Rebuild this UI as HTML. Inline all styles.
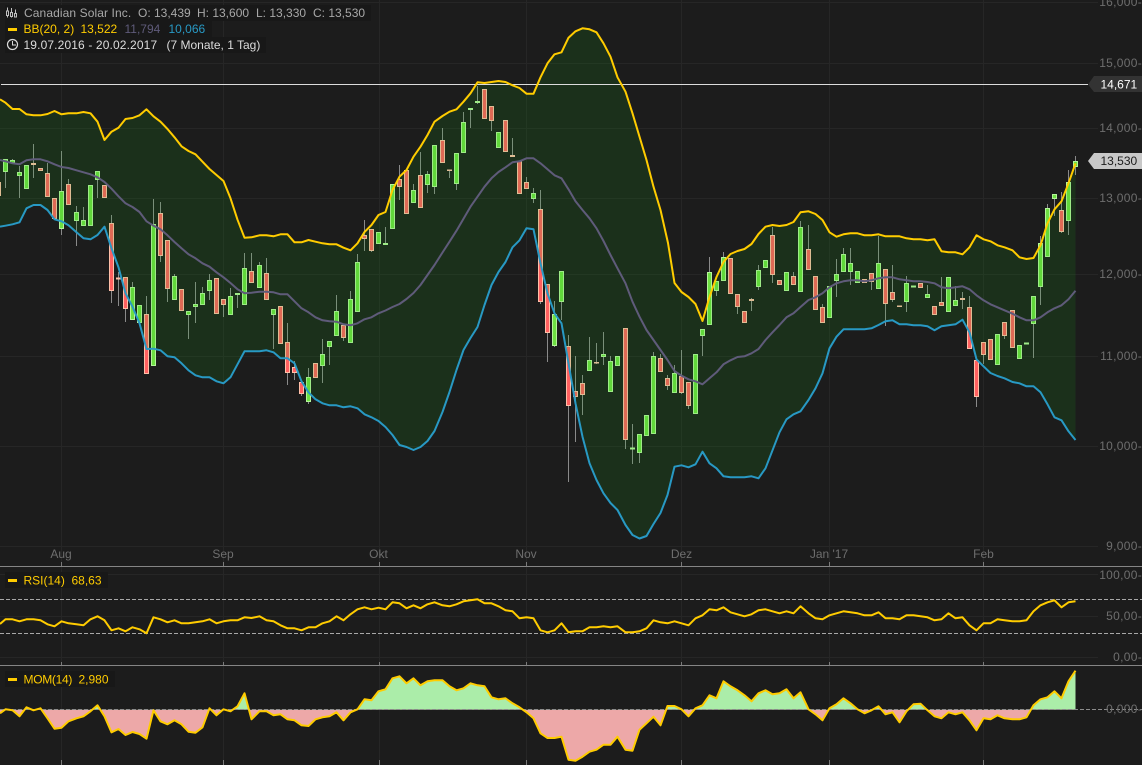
<!DOCTYPE html>
<html><head><meta charset="utf-8"><title>Canadian Solar Inc.</title>
<style>
html,body{margin:0;padding:0;background:#1c1c1c;width:1142px;height:765px;overflow:hidden}
svg{display:block}
text{font-family:"Liberation Sans",sans-serif;font-size:12px}
.ax{fill:#6e6e6e;text-anchor:end;letter-spacing:.3px}
.mo{fill:#6e6e6e;text-anchor:middle}
.y{fill:#ffcc00}
</style></head><body>
<svg width="1142" height="765" viewBox="0 0 1142 765" xmlns="http://www.w3.org/2000/svg">
<rect width="1142" height="765" fill="#1c1c1c"/>
<!-- grid -->
<path fill="none" stroke="#262626" stroke-width="1" d="M0 2.5H1098M0 63.5H1098M0 128.5H1098M0 198.5H1098M0 274.5H1098M0 356.5H1098M0 446.5H1098M0 546.5H1098M0 574.5H1098M0 616.5H1098M0 657.5H1098M61.5 0V765M223.5 0V765M379.5 0V765M526.5 0V765M681.5 0V765M829.5 0V765M983.5 0V765"/>
<!-- wicks -->
<path fill="none" stroke="#8a8a8a" stroke-width="1" d="M5.5 159V188M12.5 159V160M19.5 166V198M33.5 144V178M47.5 163V173M61.5 151V235M68.5 179V184M76.5 206V246M83.5 207V220M97.5 171V198M111.5 215V303M118.5 272V306M125.5 277V322M132.5 282V287M146.5 296V314M153.5 199V224M160.5 202V262M167.5 289V302M174.5 274V276M188.5 315V339M195.5 282V323M202.5 287V293M209.5 274V300M223.5 305V317M230.5 288V296M237.5 295V308M244.5 253V268M251.5 253V271M259.5 262V265M266.5 258V273M273.5 315V349M287.5 323V385M294.5 361V380M301.5 394V396M308.5 368V404M322.5 339V383M329.5 347V365M336.5 295V311M343.5 338V341M350.5 291V299M357.5 254V262M364.5 220V251M371.5 251V252M385.5 227V245M399.5 165V200M413.5 184V190M420.5 152V175M427.5 171V193M434.5 187V194M442.5 128V140M449.5 171V178M456.5 184V190M463.5 112V122M470.5 110V128M477.5 86V104M491.5 121V131M512.5 138V155M526.5 177V182M533.5 188V203M540.5 190V304M547.5 333V362M554.5 301V347M561.5 302V320M568.5 335V482M575.5 356V442M582.5 375V415M589.5 337V360M596.5 343V364M603.5 332V365M610.5 356V361M625.5 440V449M632.5 424V464M639.5 453V463M653.5 352V356M660.5 354V358M667.5 375V390M674.5 365V373M681.5 350V394M688.5 406V409M702.5 336V356M709.5 257V272M716.5 291V296M723.5 252V257M737.5 307V314M751.5 298V311M758.5 265V290M772.5 227V283M793.5 272V276M800.5 221V227M808.5 225V249M822.5 304V307M836.5 259V297M843.5 248V254M850.5 248V285M871.5 282V290M878.5 236V263M885.5 304V326M892.5 265V302M906.5 276V312M927.5 285V294M941.5 277V302M955.5 286V300M962.5 292V309M969.5 296V307M976.5 397V407M983.5 355V364M1004.5 336V339M1033.5 324V358M1040.5 236V305M1047.5 204V208M1054.5 199V216M1061.5 192V233M1068.5 170V235M1075.5 156V175"/>
<!-- green bodies -->
<path fill="#6edf42" stroke="#b4f59a" stroke-width="1" d="M3.5 159.5h4v12h-4zM10.5 160.5h4v2h-4zM17.5 172.5h4v3h-4zM24.5 165.5h4v23h-4zM59.5 191.5h4v37h-4zM74.5 212.5h4v8h-4zM81.5 220.5h4v5h-4zM88.5 185.5h4v40h-4zM95.5 171.5h4v8h-4zM130.5 287.5h4v32h-4zM137.5 305.5h4v17h-4zM151.5 224.5h4v141h-4zM172.5 276.5h4v23h-4zM186.5 311.5h4v3h-4zM193.5 304.5h4v2h-4zM200.5 293.5h4v11h-4zM207.5 280.5h4v10h-4zM228.5 296.5h4v18h-4zM235.5 293.5h4v1h-4zM242.5 268.5h4v36h-4zM257.5 265.5h4v22h-4zM271.5 309.5h4v5h-4zM306.5 377.5h4v24h-4zM320.5 354.5h4v11h-4zM327.5 341.5h4v5h-4zM334.5 311.5h4v24h-4zM348.5 299.5h4v43h-4zM355.5 262.5h4v49h-4zM376.5 232.5h4v11h-4zM383.5 243.5h4v1h-4zM390.5 184.5h4v44h-4zM411.5 190.5h4v12h-4zM425.5 174.5h4v10h-4zM432.5 145.5h4v41h-4zM454.5 153.5h4v30h-4zM461.5 122.5h4v30h-4zM468.5 108.5h4v1h-4zM475.5 101.5h4v1h-4zM496.5 132.5h4v15h-4zM531.5 193.5h4v5h-4zM552.5 314.5h4v31h-4zM559.5 271.5h4v30h-4zM587.5 360.5h4v10h-4zM601.5 354.5h4v2h-4zM608.5 361.5h4v30h-4zM615.5 356.5h4v9h-4zM630.5 448h4v1h-4zM637.5 434.5h4v18h-4zM644.5 415.5h4v20h-4zM651.5 356.5h4v77h-4zM672.5 373.5h4v19h-4zM693.5 354.5h4v59h-4zM700.5 329.5h4v6h-4zM707.5 272.5h4v52h-4zM714.5 281.5h4v9h-4zM721.5 257.5h4v23h-4zM756.5 270.5h4v16h-4zM763.5 260.5h4v7h-4zM784.5 272.5h4v18h-4zM798.5 227.5h4v64h-4zM827.5 286.5h4v31h-4zM834.5 274.5h4v6h-4zM841.5 254.5h4v17h-4zM848.5 263.5h4v8h-4zM855.5 271.5h4v11h-4zM876.5 263.5h4v25h-4zM904.5 283.5h4v18h-4zM911.5 286h4v1h-4zM925.5 294.5h4v3h-4zM946.5 277.5h4v34h-4zM953.5 300.5h4v5h-4zM995.5 334.5h4v30h-4zM1017.5 345.5h4v13h-4zM1024.5 343h4v1h-4zM1031.5 296.5h4v27h-4zM1038.5 243.5h4v43h-4zM1045.5 208.5h4v48h-4zM1052.5 194.5h4v4h-4zM1066.5 182.5h4v38h-4zM1073.5 161.5h4v5h-4z"/>
<!-- red bodies -->
<path fill="#ff6060" stroke="#ffbfa8" stroke-width="1" d="M-3.5 182.5h4v13h-4zM31.5 163.5h4v1h-4zM38.5 168.5h4v2h-4zM45.5 173.5h4v23h-4zM52.5 198.5h4v20h-4zM66.5 184.5h4v20h-4zM102.5 185.5h4v12h-4zM109.5 223.5h4v67h-4zM116.5 278h4v1h-4zM123.5 277.5h4v31h-4zM144.5 314.5h4v59h-4zM158.5 213.5h4v42h-4zM165.5 240.5h4v48h-4zM179.5 289.5h4v21h-4zM214.5 278.5h4v35h-4zM221.5 299.5h4v5h-4zM249.5 271.5h4v11h-4zM264.5 273.5h4v26h-4zM278.5 306.5h4v37h-4zM285.5 342.5h4v30h-4zM292.5 367.5h4v5h-4zM299.5 382.5h4v11h-4zM313.5 363.5h4v14h-4zM341.5 325.5h4v12h-4zM362.5 235.5h4v3h-4zM369.5 229.5h4v21h-4zM397.5 179.5h4v7h-4zM404.5 170.5h4v43h-4zM418.5 175.5h4v32h-4zM440.5 140.5h4v22h-4zM447.5 170h4v.5h-4zM482.5 89.5h4v29h-4zM489.5 106.5h4v14h-4zM503.5 120.5h4v31h-4zM510.5 155.5h4v1h-4zM517.5 161.5h4v32h-4zM524.5 182.5h4v6h-4zM538.5 209.5h4v92h-4zM545.5 284.5h4v48h-4zM566.5 346.5h4v59h-4zM573.5 391.5h4v5h-4zM580.5 383.5h4v11h-4zM594.5 362.5h4v.5h-4zM623.5 328.5h4v111h-4zM658.5 358.5h4v13h-4zM665.5 378.5h4v7h-4zM679.5 376.5h4v16h-4zM686.5 382.5h4v23h-4zM728.5 258.5h4v35h-4zM735.5 294.5h4v12h-4zM742.5 311.5h4v11h-4zM749.5 299.5h4v1h-4zM770.5 235.5h4v39h-4zM777.5 280.5h4v4h-4zM791.5 276.5h4v8h-4zM806.5 249.5h4v20h-4zM813.5 276.5h4v33h-4zM820.5 307.5h4v15h-4zM862.5 279.5h4v3h-4zM869.5 273.5h4v8h-4zM883.5 269.5h4v34h-4zM890.5 292.5h4v7h-4zM897.5 306h4v.5h-4zM918.5 283.5h4v4h-4zM932.5 306.5h4v8h-4zM939.5 302.5h4v3h-4zM960.5 298.5h4v1h-4zM967.5 307.5h4v41h-4zM974.5 360.5h4v36h-4zM981.5 342.5h4v12h-4zM988.5 339.5h4v20h-4zM1002.5 322.5h4v13h-4zM1010.5 310.5h4v37h-4zM1059.5 210.5h4v21h-4z"/>
<!-- band -->
<path fill="rgb(20,174,20)" fill-opacity=".137" d="M0 99.3L5.5 102.7 12.5 109 19.5 109 26.5 114.3 33.5 115.3 40.5 115.3 47.5 114 54.5 111 61.5 114.3 68.5 113.3 76.5 113.3 83.5 112 90.5 113.3 97.5 121.7 104.5 140 111.5 131.7 118.5 127.7 125.5 119 132.5 118 139.5 115.3 146.5 109.3 153.5 116.3 160.5 121.7 167.5 129 174.5 137.3 181.5 146.3 188.5 151 195.5 154.3 202.5 161.7 209.5 169 216.5 175 223.5 181 230.5 198.3 237.5 219.7 244.5 237.7 251.5 237.3 259.5 235.3 266.5 235.3 273.5 236.3 280.5 234.3 287.5 234.3 294.5 242.3 301.5 242.3 308.5 240 315.5 241.7 322.5 243.3 329.5 244.3 336.5 244.3 343.5 247.7 350.5 250.3 357.5 243.3 364.5 232 371.5 225 378.5 215 385.5 212 392.5 190 399.5 176.7 406.5 170 413.5 156.7 420.5 146.7 427.5 135 434.5 121.7 442.5 116 449.5 111.7 456.5 109.3 463.5 101.7 470.5 93.3 477.5 82.3 484.5 83 491.5 82 498.5 81 505.5 82 512.5 85.3 519.5 88 526.5 93.7 533.5 93.7 540.5 77.3 547.5 63.3 554.5 54.3 561.5 52.3 568.5 37.7 575.5 31.3 582.5 28.3 589.5 29.3 596.5 32.3 603.5 43.3 610.5 56.7 617.5 77.3 625.5 91.7 632.5 113.3 639.5 136.7 646.5 160 653.5 186.7 660.5 210 668 243 674.5 283 681.5 292 688.5 297 695.5 304 702.5 321 709.5 297 716.5 277 723.5 262 730.5 254 737.5 251 744.5 249 751.5 244 758.5 234 765.5 226.7 772.5 225 779.5 226 786.5 225 793.5 222 800.5 212.3 808.5 211.3 815.5 214 822.5 220 829.5 232.3 836.5 236.7 843.5 234.3 850.5 233.3 857.5 233.3 864.5 235.3 871.5 235.3 878.5 234.3 885.5 236.3 892.5 236.3 899.5 236.3 906.5 238.3 913.5 239.3 920.5 239.3 927.5 240.3 934.5 239.3 941.5 251.3 948.5 252.3 955.5 252.3 962.5 254.3 969.5 247.3 976.5 235.3 983.5 239.3 990.5 241.3 997.5 245.3 1004.5 247.3 1012.5 250.3 1019.5 257.3 1026.5 259 1033.5 258 1040.5 245.3 1047.5 223.3 1054.5 209.3 1061.5 201.3 1068.5 183.3 1075.5 163.3 L1075.5 440 1068.5 431.3 1061.5 420.3 1054.5 417.3 1047.5 404.3 1040.5 392.3 1033.5 386.3 1026.5 386.3 1019.5 383.3 1012.5 382 1004.5 378.3 997.5 376 990.5 373 983.5 366.3 976.5 359.3 969.5 332.3 962.5 319.7 955.5 324.3 948.5 325.3 941.5 326.3 934.5 330.3 927.5 326.3 920.5 325.3 913.5 325.3 906.5 324.3 899.5 324.3 892.5 320.3 885.5 321.3 878.5 325 871.5 328.3 864.5 329.3 857.5 329.3 850.5 329.3 843.5 329.3 836.5 336.7 829.5 348.3 822.5 373.3 815.5 388.3 808.5 400 800.5 411.3 793.5 414.3 786.5 419.3 779.5 432.3 772.5 450.3 765.5 468.3 758.5 478.3 751.5 476.3 744.5 477.3 737.5 477.3 730.5 477.3 723.5 476.3 716.5 468.3 709.5 463.3 702.5 451.7 695.5 464.3 688.5 467.3 681.5 465.3 674.5 466.7 667.5 495 660.5 513 653.5 524 646.5 536 639.5 538.5 632.5 535 625.5 525 617.5 510 610.5 503 603.5 493.3 596.5 480 589.5 463.3 582.5 436.7 575.5 403.3 568.5 363.3 561.5 323.3 554.5 313.3 547.5 293.3 540.5 263.3 533.5 229.3 526.5 228.3 519.5 240.3 512.5 247.3 505.5 262 498.5 272 491.5 285 484.5 305 477.5 327 470.5 338 463.5 350 456.5 370 449.5 392 442.5 412 434.5 431 427.5 441 420.5 447 413.5 450 406.5 447 399.5 445 392.5 435 385.5 427 378.5 421 371.5 417.3 364.5 414.3 357.5 408.3 350.5 406.3 343.5 407.3 336.5 405.3 329.5 405.3 322.5 403.3 315.5 399.3 308.5 392.3 301.5 381.3 294.5 363.3 287.5 358.3 280.5 358.3 273.5 352.3 266.5 350.3 259.5 351.3 251.5 351.3 244.5 351.3 237.5 364.3 230.5 377.3 223.5 383.3 216.5 381.3 209.5 377.3 202.5 377.3 195.5 375.3 188.5 370.3 181.5 363.3 174.5 357.3 167.5 356.3 160.5 350.3 153.5 348.7 146.5 349 139.5 323.3 132.5 306.7 125.5 293.3 118.5 267.3 111.5 248.3 104.5 226.7 97.5 235 90.5 239.3 83.5 238.3 76.5 232.3 68.5 225.3 61.5 221.3 54.5 219.3 47.5 210 40.5 205 33.5 205 26.5 208.3 19.5 222.3 12.5 224.3 5.5 225.7 0 226.7Z"/>
<!-- horizontal level -->
<path stroke="#dcdcdc" stroke-width="1" d="M1 84.5H1088"/>
<g fill="none" stroke-width="2" stroke-linejoin="round">
<!-- middle -->
<path stroke="#5f5b7a" d="M0 160L5.5 161.3 12.5 163.3 19.5 164.3 26.5 160.3 33.5 159.3 40.5 159.3 47.5 161.3 54.5 164.3 61.5 167 68.5 168 76.5 170.3 83.5 172.3 90.5 174.3 97.5 177.3 104.5 182 111.5 188.7 118.5 196.3 125.5 203.3 132.5 207 139.5 212 146.5 221.3 153.5 225.7 160.5 229.3 167.5 235.3 174.5 242 181.5 248.3 188.5 254.3 195.5 258.3 202.5 263.3 209.5 266.7 216.5 272.3 223.5 277.3 230.5 283 237.5 289.3 244.5 293.3 251.5 292.7 259.5 291.7 266.5 291.7 273.5 292.3 280.5 294.3 287.5 294.3 294.5 301.3 301.5 308.3 308.5 312.3 315.5 317.3 322.5 320.3 329.5 321.3 336.5 321.7 343.5 324.3 350.5 325.3 357.5 323.3 364.5 319.3 371.5 317.3 378.5 313.3 385.5 310.5 392.5 307 399.5 304 406.5 299 413.5 293 420.5 285 427.5 275 434.5 265 442.5 252.5 449.5 241.7 456.5 230.7 463.5 218.7 470.5 206.7 477.5 196.7 484.5 186.7 491.5 178.3 498.5 172 505.5 167.3 512.5 162.3 519.5 161.3 526.5 158.3 533.5 158.3 540.5 163.3 547.5 169.3 554.5 175.3 561.5 178.3 568.5 189.3 575.5 201.3 582.5 210 589.5 218.3 596.5 228.3 603.5 241 610.5 255 617.5 268.3 625.5 283.3 632.5 301.7 639.5 316.7 646.5 330 653.5 340 660.5 350 667.5 360 674.5 371 681.5 375.7 688.5 379.3 695.5 381.3 702.5 384.3 709.5 378.3 716.5 372.3 723.5 364.3 730.5 360.3 737.5 357 744.5 356.3 751.5 353.3 758.5 349 765.5 340 772.5 332.3 779.5 325 786.5 317.3 793.5 313.3 800.5 307 808.5 300 815.5 297.3 822.5 293.3 829.5 287.3 836.5 283.3 843.5 281.3 850.5 280.3 857.5 280.3 864.5 281.3 871.5 280.3 878.5 278.3 885.5 277.3 892.5 277.3 899.5 279.3 906.5 280.3 913.5 281.3 920.5 281.3 927.5 282 934.5 283.3 941.5 287.3 948.5 288.3 955.5 287.3 962.5 286.3 969.5 289.3 976.5 295.3 983.5 300.3 990.5 304.3 997.5 307.3 1004.5 310.3 1012.5 313.7 1019.5 317.3 1026.5 320.3 1033.5 320.3 1040.5 317.3 1047.5 312.3 1054.5 308.3 1061.5 305.3 1068.5 299.3 1075.5 290.7"/>
<!-- upper -->
<path stroke="#ffcc00" d="M0 99.3L5.5 102.7 12.5 109 19.5 109 26.5 114.3 33.5 115.3 40.5 115.3 47.5 114 54.5 111 61.5 114.3 68.5 113.3 76.5 113.3 83.5 112 90.5 113.3 97.5 121.7 104.5 140 111.5 131.7 118.5 127.7 125.5 119 132.5 118 139.5 115.3 146.5 109.3 153.5 116.3 160.5 121.7 167.5 129 174.5 137.3 181.5 146.3 188.5 151 195.5 154.3 202.5 161.7 209.5 169 216.5 175 223.5 181 230.5 198.3 237.5 219.7 244.5 237.7 251.5 237.3 259.5 235.3 266.5 235.3 273.5 236.3 280.5 234.3 287.5 234.3 294.5 242.3 301.5 242.3 308.5 240 315.5 241.7 322.5 243.3 329.5 244.3 336.5 244.3 343.5 247.7 350.5 250.3 357.5 243.3 364.5 232 371.5 225 378.5 215 385.5 212 392.5 190 399.5 176.7 406.5 170 413.5 156.7 420.5 146.7 427.5 135 434.5 121.7 442.5 116 449.5 111.7 456.5 109.3 463.5 101.7 470.5 93.3 477.5 82.3 484.5 83 491.5 82 498.5 81 505.5 82 512.5 85.3 519.5 88 526.5 93.7 533.5 93.7 540.5 77.3 547.5 63.3 554.5 54.3 561.5 52.3 568.5 37.7 575.5 31.3 582.5 28.3 589.5 29.3 596.5 32.3 603.5 43.3 610.5 56.7 617.5 77.3 625.5 91.7 632.5 113.3 639.5 136.7 646.5 160 653.5 186.7 660.5 210 668 243 674.5 283 681.5 292 688.5 297 695.5 304 702.5 321 709.5 297 716.5 277 723.5 262 730.5 254 737.5 251 744.5 249 751.5 244 758.5 234 765.5 226.7 772.5 225 779.5 226 786.5 225 793.5 222 800.5 212.3 808.5 211.3 815.5 214 822.5 220 829.5 232.3 836.5 236.7 843.5 234.3 850.5 233.3 857.5 233.3 864.5 235.3 871.5 235.3 878.5 234.3 885.5 236.3 892.5 236.3 899.5 236.3 906.5 238.3 913.5 239.3 920.5 239.3 927.5 240.3 934.5 239.3 941.5 251.3 948.5 252.3 955.5 252.3 962.5 254.3 969.5 247.3 976.5 235.3 983.5 239.3 990.5 241.3 997.5 245.3 1004.5 247.3 1012.5 250.3 1019.5 257.3 1026.5 259 1033.5 258 1040.5 245.3 1047.5 223.3 1054.5 209.3 1061.5 201.3 1068.5 183.3 1075.5 163.3"/>
<!-- lower -->
<path stroke="#2899c4" d="M0 226.7L5.5 225.7 12.5 224.3 19.5 222.3 26.5 208.3 33.5 205 40.5 205 47.5 210 54.5 219.3 61.5 221.3 68.5 225.3 76.5 232.3 83.5 238.3 90.5 239.3 97.5 235 104.5 226.7 111.5 248.3 118.5 267.3 125.5 293.3 132.5 306.7 139.5 323.3 146.5 349 153.5 348.7 160.5 350.3 167.5 356.3 174.5 357.3 181.5 363.3 188.5 370.3 195.5 375.3 202.5 377.3 209.5 377.3 216.5 381.3 223.5 383.3 230.5 377.3 237.5 364.3 244.5 351.3 251.5 351.3 259.5 351.3 266.5 350.3 273.5 352.3 280.5 358.3 287.5 358.3 294.5 363.3 301.5 381.3 308.5 392.3 315.5 399.3 322.5 403.3 329.5 405.3 336.5 405.3 343.5 407.3 350.5 406.3 357.5 408.3 364.5 414.3 371.5 417.3 378.5 421 385.5 427 392.5 435 399.5 445 406.5 447 413.5 450 420.5 447 427.5 441 434.5 431 442.5 412 449.5 392 456.5 370 463.5 350 470.5 338 477.5 327 484.5 305 491.5 285 498.5 272 505.5 262 512.5 247.3 519.5 240.3 526.5 228.3 533.5 229.3 540.5 263.3 547.5 293.3 554.5 313.3 561.5 323.3 568.5 363.3 575.5 403.3 582.5 436.7 589.5 463.3 596.5 480 603.5 493.3 610.5 503 617.5 510 625.5 525 632.5 535 639.5 538.5 646.5 536 653.5 524 660.5 513 667.5 495 674.5 466.7 681.5 465.3 688.5 467.3 695.5 464.3 702.5 451.7 709.5 463.3 716.5 468.3 723.5 476.3 730.5 477.3 737.5 477.3 744.5 477.3 751.5 476.3 758.5 478.3 765.5 468.3 772.5 450.3 779.5 432.3 786.5 419.3 793.5 414.3 800.5 411.3 808.5 400 815.5 388.3 822.5 373.3 829.5 348.3 836.5 336.7 843.5 329.3 850.5 329.3 857.5 329.3 864.5 329.3 871.5 328.3 878.5 325 885.5 321.3 892.5 320.3 899.5 324.3 906.5 324.3 913.5 325.3 920.5 325.3 927.5 326.3 934.5 330.3 941.5 326.3 948.5 325.3 955.5 324.3 962.5 319.7 969.5 332.3 976.5 359.3 983.5 366.3 990.5 373 997.5 376 1004.5 378.3 1012.5 382 1019.5 383.3 1026.5 386.3 1033.5 386.3 1040.5 392.3 1047.5 404.3 1054.5 417.3 1061.5 420.3 1068.5 431.3 1075.5 440"/>
</g>
<!-- separators -->
<path stroke="#858585" stroke-width="1" d="M0 566.5H1142M0 665.5H1142"/>
<path stroke="#7a7a7a" stroke-width="1" d="M61.5 562V566M223.5 562V566M379.5 562V566M526.5 562V566M681.5 562V566M829.5 562V566M983.5 562V566M61.5 662V665M223.5 662V665M379.5 662V665M526.5 662V665M681.5 662V665M829.5 662V665M983.5 662V665M61.5 760V765M223.5 760V765M379.5 760V765M526.5 760V765M681.5 760V765M829.5 760V765M983.5 760V765"/>
<!-- RSI -->
<path stroke="#a8a8a8" stroke-width="1" stroke-dasharray="4 2" d="M0 599.5H1142M0 633.5H1142"/>
<path fill="none" stroke="#ffcc00" stroke-width="2" stroke-linejoin="round" d="M0 624L5.5 619.3 12.5 619.3 19.5 621.3 26.5 619.3 33.5 619.3 40.5 620.3 47.5 624.3 54.5 626.3 61.5 621.3 68.5 623.3 76.5 624.3 83.5 625.3 90.5 619.3 97.5 616.3 104.5 620.3 111.5 630.3 118.5 628.3 125.5 631.3 132.5 627.3 139.5 629.3 146.5 633.3 153.5 617.3 160.5 619.3 167.5 622.3 174.5 620.3 181.5 623.3 188.5 623.3 195.5 622.3 202.5 621.3 209.5 619.3 216.5 623.3 223.5 621.3 230.5 620.3 237.5 620.3 244.5 617.3 251.5 618 259.5 616.3 266.5 620.3 273.5 621.3 280.5 625.3 287.5 628.3 294.5 628.3 301.5 630.3 308.5 627.3 315.5 627.3 322.5 623.3 329.5 621.3 336.5 616.3 343.5 620.3 350.5 614.3 357.5 609.3 364.5 607.3 371.5 609.3 378.5 607.7 385.5 609.3 392.5 602.3 399.5 603.3 406.5 608.3 413.5 605.3 420.5 608.3 427.5 604.3 434.5 602.3 442.5 605.3 449.5 606.3 456.5 604.3 463.5 601.3 470.5 600.3 477.5 599.3 484.5 603.3 491.5 603.3 498.5 606.3 505.5 610.3 512.5 611.3 519.5 618.3 526.5 617.3 533.5 618.3 540.5 630.3 547.5 632.3 554.5 630.3 561.5 623.3 568.5 632.3 575.5 631.3 582.5 631.3 589.5 627.3 596.5 627.3 603.5 626.3 610.5 627.3 617.5 626.3 625.5 632.3 632.5 632.3 639.5 631.3 646.5 628.3 653.5 620.3 660.5 622.3 667.5 623.3 674.5 621.3 681.5 623.3 688.5 625.3 695.5 618.3 702.5 615.3 709.5 609.3 716.5 610.3 723.5 607.3 730.5 612.3 737.5 614.3 744.5 616.3 751.5 614.3 758.5 610.3 765.5 609.3 772.5 611.3 779.5 613.3 786.5 611.3 793.5 613.3 800.5 606.3 808.5 613.3 815.5 618.3 822.5 619.3 829.5 615.3 836.5 613.3 843.5 611.3 850.5 612.3 857.5 613.3 864.5 615.3 871.5 615.3 878.5 612.3 885.5 618.3 892.5 618.3 899.5 619.3 906.5 615.3 913.5 615.3 920.5 616.3 927.5 617.3 934.5 620.3 941.5 619.3 948.5 613.3 955.5 618.3 962.5 617.3 969.5 625.3 976.5 630.3 983.5 623.3 990.5 623.3 997.5 619.3 1004.5 620.3 1012.5 621.3 1019.5 621.3 1026.5 620.3 1033.5 611.3 1040.5 605.3 1047.5 602.3 1054.5 600.3 1061.5 607.3 1068.5 602.3 1075.5 601.3"/>
<!-- MOM -->
<defs>
<clipPath id="a"><rect x="0" y="666" width="1142" height="43.7"/></clipPath>
<clipPath id="b"><rect x="0" y="709.7" width="1142" height="56"/></clipPath>
<path id="m" d="M0 709.7L0 713.3 5.5 709.3 12.5 710.3 19.5 716.3 26.5 707.3 33.5 710.3 40.5 708.3 47.5 718.3 54.5 728.7 61.5 727.7 68.5 721.3 76.5 718.3 83.5 716.3 90.5 711.3 97.5 705.3 104.5 716.3 111.5 732.3 118.5 729 125.5 735 132.5 732 139.5 734 146.5 738.7 153.5 710.3 160.5 721.3 167.5 724.3 174.5 720.3 181.5 724.3 188.5 731.7 195.5 732.7 202.5 727.3 209.5 708.3 216.5 715.3 223.5 709.3 230.5 711.3 237.5 706.3 244.5 693.3 251.5 719.3 259.5 711.3 266.5 711.3 273.5 715.3 280.5 714.3 287.5 719.3 294.5 720.3 301.5 725.3 308.5 726 315.5 719.3 322.5 717.3 329.5 716.3 336.5 712.3 343.5 720.3 350.5 712.3 357.5 709.3 364.5 699.3 371.5 700.3 378.5 691.3 385.5 689.3 392.5 678.3 399.5 676.3 406.5 683.3 413.5 678.3 420.5 685.3 427.5 681.3 434.5 680.3 442.5 680.3 449.5 686.3 456.5 690.3 463.5 688.3 470.5 683.3 477.5 685.3 484.5 686.3 491.5 697.3 498.5 699.3 505.5 698.3 512.5 703.3 519.5 707.3 526.5 712.3 533.5 718.3 540.5 733.3 547.5 738 554.5 738 561.5 736.7 568.5 759.7 575.5 760.7 582.5 756.7 589.5 751.7 596.5 749.7 603.5 744.7 610.5 744.7 617.5 736.7 625.5 749.7 632.5 750.7 639.5 729.7 646.5 723.3 653.5 716.7 660.5 725.3 667.5 706 674.5 706 681.5 709.3 688.5 716.3 695.5 708.3 702.5 705.3 709.5 695.3 716.5 698.3 723.5 681.3 730.5 686.3 737.5 690.3 744.5 695.3 751.5 701.3 758.5 693.3 765.5 690.3 772.5 694.3 779.5 693.3 786.5 689.3 793.5 698.3 800.5 692.3 808.5 709.3 815.5 714.3 822.5 720.3 829.5 708.3 836.5 704.3 843.5 698.3 850.5 703.3 857.5 709.3 864.5 713.3 871.5 710.3 878.5 706.3 885.5 714.3 892.5 712.3 899.5 722.3 906.5 711.3 913.5 704.3 920.5 703.7 927.5 710.3 934.5 716.3 941.5 718.3 948.5 712.3 955.5 714.3 962.5 712.3 969.5 720.3 976.5 730.3 983.5 718.3 990.5 719.3 997.5 715.3 1004.5 718.3 1012.5 719.3 1019.5 719.3 1026.5 717.3 1033.5 705.3 1040.5 699.3 1047.5 697.3 1054.5 691.3 1061.5 698.3 1068.5 681.3 1075.5 670.7 L1075.5 709.7Z"/>
</defs>
<use href="#m" fill="#abeda9" clip-path="url(#a)"/>
<use href="#m" fill="#eda8a8" clip-path="url(#b)"/>
<path stroke="#8c8c8c" stroke-width="1" stroke-dasharray="4 2" d="M0 709.5H1142"/>
<path fill="none" stroke="#ffcc00" stroke-width="2" stroke-linejoin="round" d="M0 713.3L5.5 709.3 12.5 710.3 19.5 716.3 26.5 707.3 33.5 710.3 40.5 708.3 47.5 718.3 54.5 728.7 61.5 727.7 68.5 721.3 76.5 718.3 83.5 716.3 90.5 711.3 97.5 705.3 104.5 716.3 111.5 732.3 118.5 729 125.5 735 132.5 732 139.5 734 146.5 738.7 153.5 710.3 160.5 721.3 167.5 724.3 174.5 720.3 181.5 724.3 188.5 731.7 195.5 732.7 202.5 727.3 209.5 708.3 216.5 715.3 223.5 709.3 230.5 711.3 237.5 706.3 244.5 693.3 251.5 719.3 259.5 711.3 266.5 711.3 273.5 715.3 280.5 714.3 287.5 719.3 294.5 720.3 301.5 725.3 308.5 726 315.5 719.3 322.5 717.3 329.5 716.3 336.5 712.3 343.5 720.3 350.5 712.3 357.5 709.3 364.5 699.3 371.5 700.3 378.5 691.3 385.5 689.3 392.5 678.3 399.5 676.3 406.5 683.3 413.5 678.3 420.5 685.3 427.5 681.3 434.5 680.3 442.5 680.3 449.5 686.3 456.5 690.3 463.5 688.3 470.5 683.3 477.5 685.3 484.5 686.3 491.5 697.3 498.5 699.3 505.5 698.3 512.5 703.3 519.5 707.3 526.5 712.3 533.5 718.3 540.5 733.3 547.5 738 554.5 738 561.5 736.7 568.5 759.7 575.5 760.7 582.5 756.7 589.5 751.7 596.5 749.7 603.5 744.7 610.5 744.7 617.5 736.7 625.5 749.7 632.5 750.7 639.5 729.7 646.5 723.3 653.5 716.7 660.5 725.3 667.5 706 674.5 706 681.5 709.3 688.5 716.3 695.5 708.3 702.5 705.3 709.5 695.3 716.5 698.3 723.5 681.3 730.5 686.3 737.5 690.3 744.5 695.3 751.5 701.3 758.5 693.3 765.5 690.3 772.5 694.3 779.5 693.3 786.5 689.3 793.5 698.3 800.5 692.3 808.5 709.3 815.5 714.3 822.5 720.3 829.5 708.3 836.5 704.3 843.5 698.3 850.5 703.3 857.5 709.3 864.5 713.3 871.5 710.3 878.5 706.3 885.5 714.3 892.5 712.3 899.5 722.3 906.5 711.3 913.5 704.3 920.5 703.7 927.5 710.3 934.5 716.3 941.5 718.3 948.5 712.3 955.5 714.3 962.5 712.3 969.5 720.3 976.5 730.3 983.5 718.3 990.5 719.3 997.5 715.3 1004.5 718.3 1012.5 719.3 1019.5 719.3 1026.5 717.3 1033.5 705.3 1040.5 699.3 1047.5 697.3 1054.5 691.3 1061.5 698.3 1068.5 681.3 1075.5 670.7"/>
<!-- legend backgrounds -->
<path fill="#181818" d="M5 5H371V21H212V37H266V53H5ZM5 572H108V588H5ZM5 671H115V687H5Z"/>
<!-- legend icons -->
<path fill="none" stroke="#c0c0c0" stroke-width="1" d="M7.5 7.5V17.5M11.5 8V17.5M15.5 9.5V17.5"/>
<path fill="#1c1c1c" stroke="#c0c0c0" stroke-width="1" d="M6.5 11h2v4.5h-2zM10.5 12.5h2v4h-2zM14.5 13.5h2v3.5h-2z"/>
<path fill="#ffcc00" d="M8 28h9v3H8ZM8 579h9v3H8ZM8 678h9v3H8Z"/>
<circle cx="12.5" cy="44.5" r="5" fill="none" stroke="#dcdcdc" stroke-width="1.2"/>
<path fill="none" stroke="#dcdcdc" stroke-width="1" d="M12.5 41V45H16"/>
<!-- legend text -->
<g fill="#a8a8a8"><text x="24" y="17" letter-spacing=".1">Canadian Solar Inc.</text><text x="138" y="17">O: 13,439</text><text x="197" y="17">H: 13,600</text><text x="256" y="17">L: 13,330</text><text x="313" y="17">C: 13,530</text></g>
<text class="y" x="23.5" y="33">BB(20, 2)</text><text class="y" x="80.5" y="33">13,522</text><text x="124.5" y="33" fill="#5f5b7a">11,794</text><text x="168.5" y="33" fill="#2899c4">10,066</text>
<text x="23.5" y="49" fill="#dcdcdc" letter-spacing=".13">19.07.2016 - 20.02.2017</text><text x="166.5" y="49" fill="#dcdcdc">(7 Monate, 1 Tag)</text>
<text class="y" x="23.5" y="584.5">RSI(14)</text><text class="y" x="71.5" y="584.5">68,63</text>
<text class="y" x="23.5" y="683.5" letter-spacing="-.3">MOM(14)</text><text class="y" x="78.5" y="683.5">2,980</text>
<!-- months -->
<text class="mo" x="61" y="558">Aug</text><text class="mo" x="223" y="558">Sep</text><text class="mo" x="378.5" y="558">Okt</text><text class="mo" x="526" y="558">Nov</text><text class="mo" x="681.5" y="558">Dez</text><text class="mo" x="829" y="558">Jan '17</text><text class="mo" x="983.5" y="558">Feb</text>
<!-- axis -->
<text class="ax" x="1142" y="6">16,000-</text><text class="ax" x="1142" y="67">15,000-</text><text class="ax" x="1142" y="132">14,000-</text><text class="ax" x="1142" y="202">13,000-</text><text class="ax" x="1142" y="278">12,000-</text><text class="ax" x="1142" y="360">11,000-</text><text class="ax" x="1142" y="450">10,000-</text><text class="ax" x="1142" y="550">9,000-</text><text class="ax" x="1142" y="579">100,00-</text><text class="ax" x="1142" y="620">50,00-</text><text class="ax" x="1142" y="661">0,00-</text><text class="ax" x="1142" y="713">0,000-</text>
<!-- tags -->
<path fill="#333333" d="M1088 84.5L1094 76H1142V92H1094Z"/>
<text x="1100.5" y="88.5" fill="#ffffff">14,671</text>
<path fill="#c8c8c8" d="M1088 161L1094 153H1142V169H1094Z"/>
<text x="1100.5" y="165" fill="#1c1c1c">13,530</text>
</svg>
</body></html>
